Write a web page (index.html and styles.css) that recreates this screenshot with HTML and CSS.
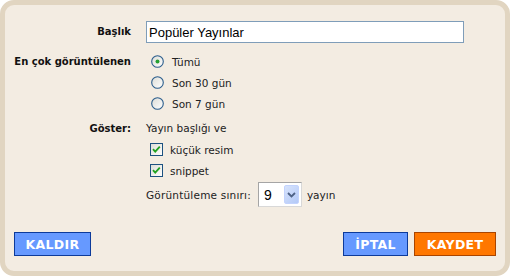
FILE: index.html
```html
<!DOCTYPE html>
<html lang="tr">
<head>
    <meta charset="UTF-8">
    <title>Popüler Yayınlar</title>
    <link rel="stylesheet" href="styles.css">
</head>
<body>
    <div class="panel">
        <div class="field">
            <label class="label" for="title">Başlık</label>
            <input class="title-input" id="title" type="text" value="Popüler Yayınlar">
        </div>

        <div class="field field-views">
            <span class="label">En çok görüntülenen</span>
            <div class="options">
                <div class="option">
                    <svg class="radio" width="13" height="13" viewBox="0 0 13 13">
                        <defs>
                            <linearGradient id="rg" x1="0" y1="0" x2="1" y2="1">
                                <stop offset="0" stop-color="#dcdcd6"/>
                                <stop offset="1" stop-color="#ffffff"/>
                            </linearGradient>
                        </defs>
                        <circle cx="6.5" cy="6.5" r="5.8" fill="url(#rg)" stroke="#2b5d8c" stroke-width="1.1"/>
                        <circle cx="6.5" cy="6.5" r="2" fill="#27a032"/>
                    </svg>
                    <span>Tümü</span>
                </div>
                <div class="option">
                    <svg class="radio" width="13" height="13" viewBox="0 0 13 13">
                        <circle cx="6.5" cy="6.5" r="5.8" fill="url(#rg)" stroke="#2b5d8c" stroke-width="1.1"/>
                    </svg>
                    <span>Son 30 gün</span>
                </div>
                <div class="option">
                    <svg class="radio" width="13" height="13" viewBox="0 0 13 13">
                        <circle cx="6.5" cy="6.5" r="5.8" fill="url(#rg)" stroke="#2b5d8c" stroke-width="1.1"/>
                    </svg>
                    <span>Son 7 gün</span>
                </div>
            </div>
        </div>

        <div class="field field-show">
            <span class="label">Göster:</span>
            <div class="options">
                <div class="line">Yayın başlığı ve</div>
                <div class="option check">
                    <svg class="box" width="13" height="13" viewBox="0 0 13 13">
                        <rect x="0.5" y="0.5" width="12" height="12" fill="url(#rg)" stroke="#1c5180"/>
                        <path d="M3 6.2 L5.2 8.6 L9.8 3.6" fill="none" stroke="#21a121" stroke-width="1.8"/>
                    </svg>
                    <span>küçük resim</span>
                </div>
                <div class="option check">
                    <svg class="box" width="13" height="13" viewBox="0 0 13 13">
                        <rect x="0.5" y="0.5" width="12" height="12" fill="url(#rg)" stroke="#1c5180"/>
                        <path d="M3 6.2 L5.2 8.6 L9.8 3.6" fill="none" stroke="#21a121" stroke-width="1.8"/>
                    </svg>
                    <span>snippet</span>
                </div>
                <div class="limit">
                    <span class="limit-text">Görüntüleme sınırı:</span>
                    <div class="dropdown">
                        <span class="value">9</span>
                        <span class="arrow">
                            <svg width="9" height="6" viewBox="0 0 9 6">
                                <path d="M1 1 L4.5 4.5 L8 1" fill="none" stroke="#4d6185" stroke-width="1.8"/>
                            </svg>
                        </span>
                    </div>
                    <span>yayın</span>
                </div>
            </div>
        </div>

        <div class="actions">
            <button class="btn btn-blue">KALDIR</button>
            <span class="spacer"></span>
            <button class="btn btn-blue">İPTAL</button>
            <button class="btn btn-orange">KAYDET</button>
        </div>
    </div>
</body>
</html>
```

FILE: styles.css
```css
body {
    margin: 0;
    padding: 0;
    background-color: #fff;
    font-family: "DejaVu Sans", Verdana, sans-serif;
    font-size: 10.5px;
    color: #222;
}

.panel {
    box-sizing: border-box;
    width: 510px;
    height: 276px;
    border: 5px solid #e1d5c1;
    border-radius: 14px;
    background-color: #f3ece2;
    padding: 16px 9px 15px 0;
    display: flex;
    flex-direction: column;
}

.field {
    display: grid;
    grid-template-columns: 126px 1fr;
    column-gap: 15px;
    align-items: start;
}

.label {
    font-weight: bold;
    font-size: 10px;
    color: #111;
    text-align: right;
    line-height: 21px;
}

.field:first-child .label {
    line-height: 22px;
}

.title-input {
    box-sizing: border-box;
    width: 318px;
    height: 22px;
    margin: 0;
    padding: 0 2px;
    border: 1px solid #7f9db9;
    background-color: #fff;
    font-family: "Liberation Sans", Arial, sans-serif;
    font-size: 13px;
    color: #000;
    outline: none;
}

.field-views {
    margin-top: 8px;
}

.field-show {
    margin-top: 4px;
}

.options {
    display: flex;
    flex-direction: column;
}

.option {
    display: flex;
    align-items: center;
    height: 21px;
    padding-left: 5px;
}

.option .radio {
    margin-right: 8px;
}

.option.check {
    padding-left: 4px;
}

.option .box {
    margin-right: 7px;
}

.line {
    line-height: 21px;
}

.limit {
    display: flex;
    align-items: center;
    height: 25px;
    margin-top: 1px;
}

.limit-text {
    letter-spacing: 0.2px;
}

.dropdown {
    box-sizing: border-box;
    width: 44px;
    height: 25px;
    margin: 0 5px 0 7px;
    border: 1px solid #a5a5a5;
    border-right-color: #d8d8d8;
    border-bottom-color: #d8d8d8;
    background-color: #fff;
    display: flex;
    align-items: center;
    padding: 0 2px 0 5px;
}

.dropdown .value {
    flex: 1;
    font-family: "Liberation Sans", Arial, sans-serif;
    font-size: 14px;
    color: #000;
}

.dropdown .arrow {
    width: 15px;
    height: 19px;
    border-radius: 2px;
    background: linear-gradient(135deg, #d7e3fc, #b3c9f7);
    border: 1px solid #c3d3fd;
    box-sizing: border-box;
    display: flex;
    align-items: center;
    justify-content: center;
}

.actions {
    margin-top: auto;
    display: flex;
    align-items: center;
    gap: 6px;
    padding-left: 9px;
}

.spacer {
    flex: 1;
}

.btn {
    height: 24px;
    padding: 0;
    border: 1px solid #0c3a9a;
    font-family: "DejaVu Sans", Verdana, sans-serif;
    font-weight: bold;
    font-size: 12.5px;
    letter-spacing: 0.3px;
    color: #fff;
    cursor: pointer;
}

.btn-blue {
    background-color: #6699ff;
}

.btn-blue:first-child {
    width: 77px;
}

.btn-blue:nth-child(3) {
    width: 65px;
}

.btn-orange {
    width: 82px;
    background-color: #ff7700;
    border-color: #a94500;
}
```
